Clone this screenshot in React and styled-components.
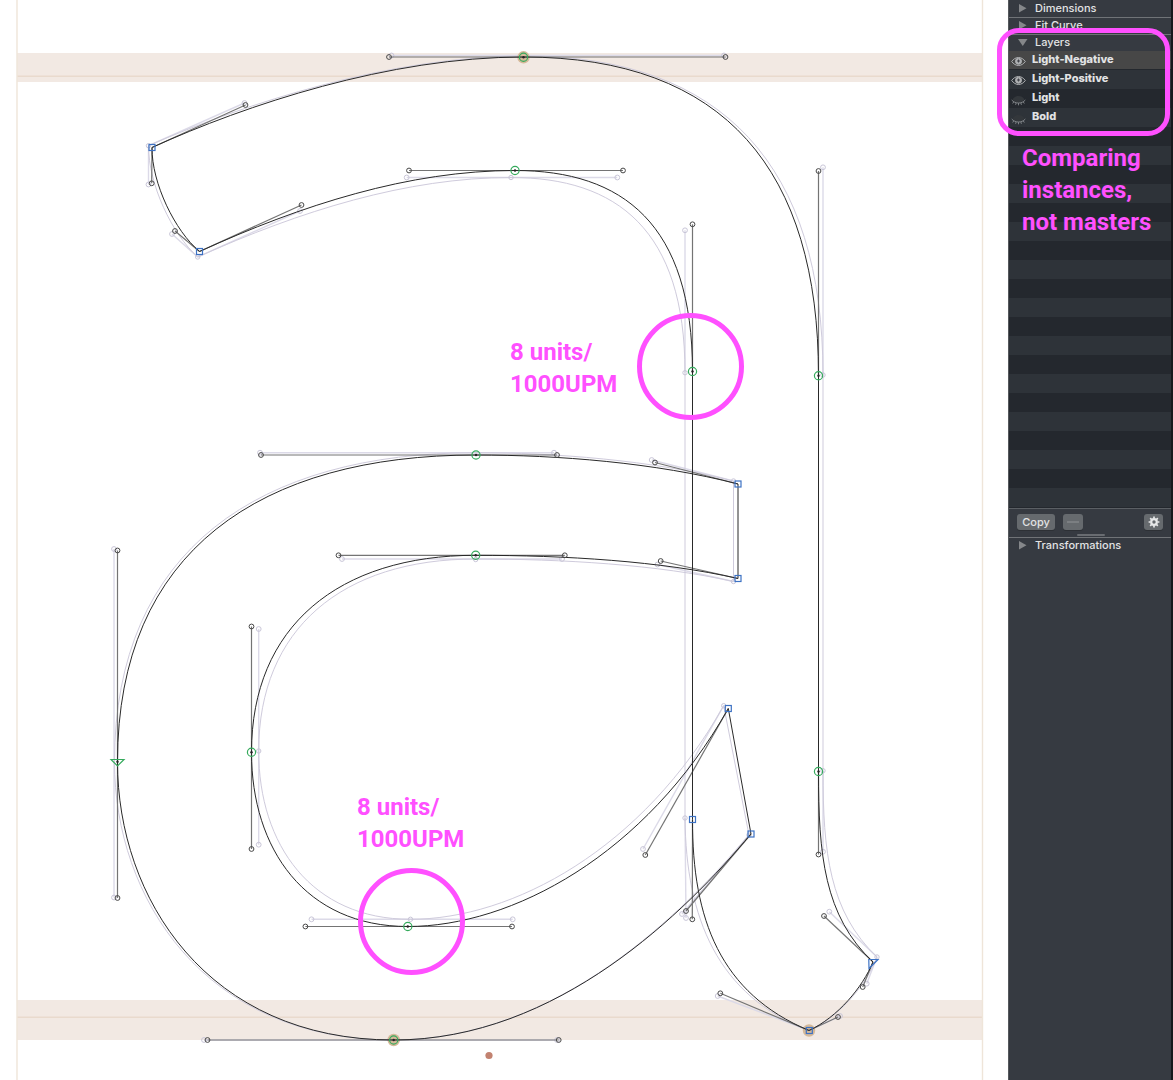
import React, { useState } from "react";
import styled, { createGlobalStyle } from "styled-components";

const GlobalStyle = createGlobalStyle`
  * { box-sizing: border-box; }
  body { margin: 0; background: #fff; }
  button { font: inherit; color: inherit; border: 0; padding: 0; background: none; }
`;

const PINK = "#ff50ff";

const Page = styled.div`
  display: flex;
  min-height: 100vh;
  font-family: Inter, "Liberation Sans", sans-serif;
  font-size: 11px;
  line-height: 16px;
`;

const Canvas = styled.main`
  position: relative;
  flex: 1;
  min-width: 0;
  overflow: hidden;
`;

const Drawing = styled.svg`
  display: block;
`;

const Note = styled.p`
  position: absolute;
  left: ${(p) => p.$x}px;
  top: ${(p) => p.$y}px;
  margin: 0;
  color: ${PINK};
  font-family: Roboto, "Noto Sans", sans-serif;
  font-size: 24px;
  font-weight: 700;
  line-height: 32px;
  white-space: nowrap;
`;

const Ring = styled.div`
  position: absolute;
  left: ${(p) => p.$x}px;
  top: ${(p) => p.$y}px;
  width: 107px;
  height: 107px;
  border: 5px solid ${PINK};
  border-radius: 50%;
`;

const Sidebar = styled.aside`
  position: relative;
  width: 165px;
  flex: none;
  background: #363a41;
  border-left: 1px solid #55585c;
  border-right: 2px solid #17191c;
  color: #e2e3e4;
`;

const SectionHeader = styled.button`
  display: flex;
  align-items: center;
  gap: 8px;
  width: 100%;
  height: 17px;
  padding: 0 0 2px 10px;
  font-weight: 500;
  border-top: 1px solid ${(p) => (p.$first ? "transparent" : "#707377")};
`;

const Layers = styled.section`
  position: relative;
`;

const Highlight = styled.div`
  position: absolute;
  left: -12px;
  right: 1px;
  top: -6px;
  height: 108px;
  border: 5px solid ${PINK};
  border-radius: 22px;
  pointer-events: none;
`;

const List = styled.ul`
  list-style: none;
  margin: 0;
  padding: 0;
  border-bottom: 1px solid #24282e;
`;

const Row = styled.li`
  display: flex;
  align-items: center;
  gap: 6px;
  height: 19px;
  padding: 0 0 3px 2px;
  font-weight: 800;
  background: #24282e;
  &:nth-child(even) { background: #2e3339; }
  &:first-child { background: #474747; box-shadow: inset 0 -1px 0 #24282e; }
`;

const Eye = styled.button`
  width: 15px;
  height: 15px;
  margin-top: 4px;
  svg { display: block; }
`;

const Toolbar = styled.div`
  position: relative;
  display: flex;
  align-items: center;
  gap: 8px;
  height: 29px;
  padding: 0 8px 2px 8px;
  border-top: 1px solid #5b5f64;
`;

const ToolButton = styled.button`
  display: flex;
  align-items: center;
  justify-content: center;
  width: ${(p) => p.$w}px;
  height: 16px;
  border-radius: 3px;
  background: #666a6e;
  box-shadow: 0 1px 0 #2d3035;
  font-weight: 500;
  &:last-of-type { margin-left: auto; }
`;

const Grip = styled.span`
  position: absolute;
  left: 68px;
  bottom: 1px;
  width: 28px;
  height: 2px;
  border-radius: 1px;
  background: #696c71;
`;

const black = {
  path:
    "M152 147.5C245.5 105 389 57 523.5 57C725.5 57 818.5 171 818.5 375.5V771.5C818.5 854.5 824 916 873 962C862.7 987 838 1017 809 1030.5C720.3 993.3 692.3 919.3 692.5 819.5V371.5C692.5 224.3 623 170.5 515 170.5C409 170.5 301.5 205 199.5 251.5C175 231 151.7 183.3 152 147.5Z" +
    "M738 484C655 462.5 557 455 476 455C261 455 117.5 550.5 117.5 762C117.5 898 207.5 1040 393.7 1040C558.7 1040 686 911 751 834L728.3 708.5C645.3 855 512 926.5 407.8 926.5C305.4 926.5 251.5 849 251.5 752.3C251.5 626.5 338.5 555.3 475.7 555.3C564.8 555.3 660.7 561 738 578.5Z",
  handles: [
    [152, 147.5, 245.5, 105], [523.5, 57, 389, 57], [523.5, 57, 725.5, 57],
    [818.5, 375.5, 818.5, 171], [818.5, 771.5, 818.5, 854.5], [873, 962, 824, 916],
    [873, 962, 862.7, 987], [809, 1030.5, 838, 1017], [809, 1030.5, 720.3, 993.3],
    [692.5, 819.5, 692.3, 919.3], [692.5, 371.5, 692.5, 224.3], [515, 170.5, 623, 170.5],
    [515, 170.5, 409, 170.5], [199.5, 251.5, 301.5, 205], [199.5, 251.5, 175, 231],
    [152, 147.5, 151.7, 183.3], [738, 484, 655, 462.5], [476, 455, 557, 455],
    [476, 455, 261, 455], [117.5, 762, 117.5, 550.5], [117.5, 762, 117.5, 898],
    [393.7, 1040, 207.5, 1040], [393.7, 1040, 558.7, 1040], [751, 834, 686, 911],
    [728.3, 708.5, 645.3, 855], [407.8, 926.5, 512, 926.5], [407.8, 926.5, 305.4, 926.5],
    [251.5, 752.3, 251.5, 849], [251.5, 752.3, 251.5, 626.5], [475.7, 555.3, 338.5, 555.3],
    [475.7, 555.3, 564.8, 555.3], [738, 578.5, 660.7, 561],
  ],
};

const pale = {
  path:
    "M148.5 145.7C244.5 103.5 391.5 56 525 56C724 56 823 167.3 823 375V770.7C823 851.7 829.3 911.7 877 957C866.7 983.7 840 1017 809 1030.5C717.7 996 686 918 685 818V372.7C685 230.3 617.3 177.5 511 177.5C406.7 177.5 300 211 197.7 257C172 234 148.5 184.5 148.5 145.7Z" +
    "M733.5 481C651.7 460 554 452.7 476 452.7C260 452.7 114.5 549 114.5 762C114.5 897.5 204 1040 393 1040C557 1040 682 914 749 835L723.7 705.7C643 849 512.7 919.3 410.5 919.3C311.5 919.3 258.7 844.7 258.7 751C258.7 629 342 559 475.7 559C562 559 657.5 564.5 733.5 581.5Z",
  handles: [
    [148.5, 145.7, 244.5, 103], [525, 55.5, 391.5, 55.5], [525, 55.5, 724, 55.5],
    [823, 375, 823, 167.3], [823, 770.7, 823, 851.7], [877, 957, 829.3, 911.7],
    [877, 957, 866.7, 983.7], [809, 1030.5, 840, 1016], [809, 1030.5, 717.7, 996],
    [685, 818, 686, 918], [685, 372.7, 685, 230.3], [511, 177.5, 617.3, 177.5],
    [511, 177.5, 406.7, 177.5], [197.7, 257, 300, 211], [197.7, 257, 172, 234],
    [148.5, 145.7, 148.5, 184.5], [733.5, 481, 651.7, 460], [476, 452.7, 554, 452.7],
    [476, 452.7, 260, 452.7], [114, 762, 114, 549], [114, 762, 114, 897.5],
    [393, 1040, 204, 1040], [393, 1040, 557, 1040], [749, 835, 682, 914],
    [723.7, 705.7, 643, 849], [410.5, 919.3, 512.7, 919.3], [410.5, 919.3, 311.5, 919.3],
    [258.7, 751, 258.7, 844.7], [258.7, 751, 258.7, 629], [475.7, 559, 342, 559],
    [475.7, 559, 562, 559], [733.5, 581.5, 657.5, 564.5],
  ],
};

const paleNodes = [
  [148.5, 145.7], [823, 375], [823, 770.7], [877, 957], [685, 818], [685, 372.7],
  [511, 177.5], [197.7, 257], [733.5, 481], [749, 835], [723.7, 705.7],
  [410.5, 919.3], [258.7, 751], [475.7, 559.5], [733.5, 581.5],
];
const smooth = [
  [523.5, 57.3], [818.5, 375.7], [818.5, 771.5], [692.5, 371.5], [515, 170.5],
  [476, 455], [393.7, 1040], [407.8, 926.5], [251.5, 752.3], [475.7, 555.3],
];
const corners = [
  [152, 147.5], [199.5, 251.5], [809.3, 1030.5], [692.5, 819.5],
  [738, 484], [738, 578.5], [751, 834], [728.3, 708.5],
];
const aligned = [[523.5, 57.3], [393.7, 1040], [809, 1030.5]];

function Outline({ data, line, handle, knob, width }) {
  return (
    <g fill="none">
      <g stroke={handle} strokeWidth={width}>
        {data.handles.map(([a, b, c, d], i) => <path key={i} d={`M${a} ${b}L${c} ${d}`} />)}
      </g>
      <path d={data.path} stroke={line} strokeWidth="1" />
      <g stroke={knob} strokeWidth="1">
        {data.handles.map(([, , x, y], i) => <circle key={i} cx={x} cy={y} r="2.4" />)}
      </g>
    </g>
  );
}

function Glyph() {
  return (
    <Drawing width="1008" height="1080" viewBox="0 0 1008 1080" role="img" aria-label="Outline of the letter a">
      <path d="M17 53H982V82H17zM17 1000H982V1040H17z" fill="#f2e9e3" />
      <path d="M17 76.200H982M17 1017.200H982" stroke="#e9dacd" strokeWidth="1.600" />
      <path d="M17 0V1080M982.500 0V1080" stroke="#efe5d9" strokeWidth="1.400" />
      <Outline data={pale} line="#cfcbdc" handle="#dcdae8" knob="#c9c6d8" width="1.4" />
      <g fill="none" stroke="#c9c6d8">
        {paleNodes.map(([x, y], i) => <circle key={i} cx={x} cy={y} r="2.2" />)}
      </g>
      {aligned.map(([x, y], i) => <circle key={i} cx={x} cy={y} r="6.2" fill="#d5b999" />)}
      <Outline data={black} line="#292929" handle="#747474" knob="#484848" width="1.2" />
      {smooth.map(([x, y], i) => (
        <g key={i}>
          <circle cx={x} cy={y} r="4.1" fill="none" stroke="#35aa5c" strokeWidth="1.2" />
          <circle cx={x} cy={y} r="1.2" fill="#222" />
        </g>
      ))}
      <g fill="none" stroke="#3d72c4" strokeWidth="1.2">
        {corners.map(([x, y], i) => <rect key={i} x={x - 3} y={y - 3} width="6" height="6" />)}
        <path d="M868.8 959.5H878L869 968.5Z" />
      </g>
      <path d="M111 759.5H124L117.5 766Z" fill="none" stroke="#35aa5c" strokeWidth="1.2" />
      <circle cx="117.5" cy="761.7" r="1.2" fill="#222" />
      <circle cx="489" cy="1055.5" r="3.6" fill="#c28270" />
    </Drawing>
  );
}

function Triangle({ open }) {
  return (
    <svg width="8" height="10" viewBox="0 0 8 10" fill="#85878a" aria-hidden="true" overflow="visible">
      <path d={open ? "M-1 2H8.500L3.750 9Z" : "M0 1V9.500L7.500 5.250Z"} />
    </svg>
  );
}

function EyeIcon({ open }) {
  return (
    <svg width="15" height="15" viewBox="0 0 15 15" fill="none" stroke={open ? "#aeb0b2" : "#7f8387"} aria-hidden="true">
      {open ? (
        <>
          <path d="M.7 7.500C2.500 5 4.800 3.500 7.500 3.500S12.500 5 14.300 7.500C12.500 10 10.200 11.500 7.500 11.500S2.500 10 .7 7.500Z" />
          <circle cx="7.500" cy="7.300" r="3" fill="#aeb0b2" />
          <path d="M7.500 5.500V8.500M6 7H9" stroke="#42454a" />
        </>
      ) : (
        <>
          <path d="M1.500 7.500C3 5 5 4 7.500 4S12 5 13.500 7.500C12 9.500 10 10.500 7.500 10.500S3 9.500 1.500 7.500Z" fill="#33373b" stroke="none" />
          <path d="M.7 8C4 12 11 12 14.300 8M2.800 9.800L1.700 11.500M5.200 10.800L4.600 12.800M7.500 11V13.300M9.800 10.800L10.400 12.800M12.200 9.800L13.300 11.500" />
        </>
      )}
    </svg>
  );
}

function Gear() {
  return (
    <svg width="12" height="12" viewBox="0 0 12 12" fill="none" stroke="#e7e8e9" aria-hidden="true">
      <circle cx="6" cy="6" r="2.800" strokeWidth="2.200" />
      <path d="M6 .6V2.500M6 9.500V11.400M.6 6H2.500M9.500 6H11.400M2.200 2.200L3.500 3.500M8.500 8.500L9.800 9.800M2.200 9.800L3.500 8.500M8.500 3.500L9.800 2.200" strokeWidth="1.700" />
    </svg>
  );
}

const STRIPES = 24;

export default function App() {
  const [layers, setLayers] = useState([
    { name: "Light-Negative", visible: true },
    { name: "Light-Positive", visible: true },
    { name: "Light", visible: false },
    { name: "Bold", visible: false },
  ]);
  const toggle = (name) =>
    setLayers((all) => all.map((l) => (l.name === name ? { ...l, visible: !l.visible } : l)));

  return (
    <>
      <GlobalStyle />
      <Page>
        <Canvas>
          <Glyph />
          <Ring $x={637} $y={313} />
          <Ring $x={358} $y={868} />
          <Note $x={510} $y={336}>8 units/<br />1000UPM</Note>
          <Note $x={357} $y={791}>8 units/<br />1000UPM</Note>
        </Canvas>
        <Sidebar>
          <SectionHeader $first aria-expanded="false"><Triangle />Dimensions</SectionHeader>
          <SectionHeader aria-expanded="false"><Triangle />Fit Curve</SectionHeader>
          <Layers>
            <SectionHeader aria-expanded="true"><Triangle open />Layers</SectionHeader>
            <List>
              {layers.map((l) => (
                <Row key={l.name}>
                  <Eye aria-label={`Show ${l.name}`} aria-pressed={l.visible} onClick={() => toggle(l.name)}>
                    <EyeIcon open={l.visible} />
                  </Eye>
                  {l.name}
                </Row>
              ))}
              {Array.from({ length: STRIPES - layers.length }, (_, i) => <Row key={i} aria-hidden="true" />)}
            </List>
            <Highlight />
            <Note $x={13} $y={108}>Comparing<br />instances,<br />not masters</Note>
          </Layers>
          <Toolbar>
            <ToolButton $w={38}>Copy</ToolButton>
            <ToolButton $w={20} aria-label="Remove layer">
              <svg width="12" height="2" aria-hidden="true"><path d="M0 1H12" stroke="#909396" /></svg>
            </ToolButton>
            <ToolButton $w={19} aria-label="Layer options"><Gear /></ToolButton>
            <Grip />
          </Toolbar>
          <SectionHeader aria-expanded="false"><Triangle />Transformations</SectionHeader>
        </Sidebar>
      </Page>
    </>
  );
}
